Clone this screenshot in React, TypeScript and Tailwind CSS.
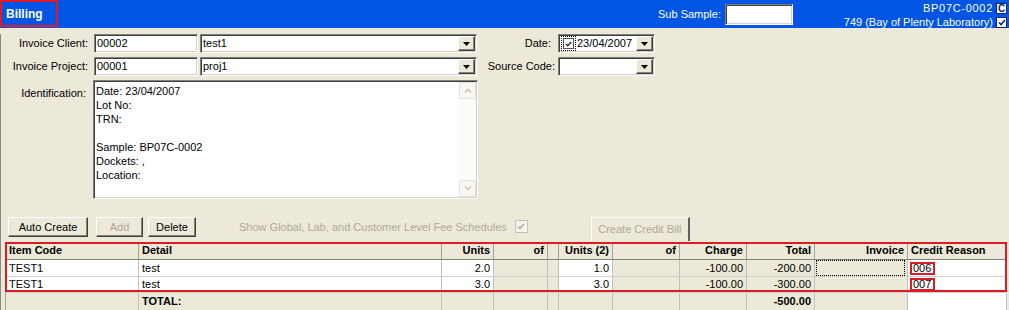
import React from "react";

const inset =
  "border border-t-[#7f7f7f] border-l-[#7f7f7f] border-b-white border-r-white shadow-[inset_1px_1px_0_#404040,inset_-1px_-1px_0_#d4d0c8] bg-white";
const raised =
  "border border-t-white border-l-white border-b-[#404040] border-r-[#404040] shadow-[inset_-1px_-1px_0_#808080] bg-[#ece9d8]";

const cols =
  "grid grid-cols-[133px_303px_52px_54px_11px_54px_67px_67px_68px_93px_99px]";

type Cell = {
  text?: React.ReactNode;
  right?: boolean;
  white?: boolean;
  focus?: boolean;
};

const rows: Cell[][] = [
  [
    { text: "TEST1", white: true },
    { text: "test", white: true },
    { text: "2.0", right: true, white: true },
    {},
    {},
    { text: "1.0", right: true, white: true },
    {},
    { text: "-100.00", right: true },
    { text: "-200.00", right: true },
    { focus: true },
    { text: "006", white: true },
  ],
  [
    { text: "TEST1", white: true },
    { text: "test", white: true },
    { text: "3.0", right: true, white: true },
    {},
    {},
    { text: "3.0", right: true, white: true },
    {},
    { text: "-100.00", right: true },
    { text: "-300.00", right: true },
    {},
    { text: "007", white: true },
  ],
];

const headers: { label: string; right?: boolean }[] = [
  { label: "Item Code" },
  { label: "Detail" },
  { label: "Units", right: true },
  { label: "of", right: true },
  { label: "" },
  { label: "Units (2)", right: true },
  { label: "of", right: true },
  { label: "Charge", right: true },
  { label: "Total", right: true },
  { label: "Invoice", right: true },
  { label: "Credit Reason" },
];

function DropBtn() {
  return (
    <div
      className={`mr-[1px] flex h-[15px] w-[17px] shrink-0 items-center justify-center self-center ${raised}`}
    >
      <svg width="7" height="4" viewBox="0 0 7 4">
        <path d="M0 0h7L3.5 4z" fill="#000" />
      </svg>
    </div>
  );
}

function Combo({ value, width }: { value?: string; width: string }) {
  return (
    <div className={`flex h-full ${width} ${inset}`}>
      <span className="flex flex-1 items-center pl-[2px]">{value}</span>
      <DropBtn />
    </div>
  );
}

function Button({
  label,
  width,
  disabled,
}: {
  label: string;
  width: string;
  disabled?: boolean;
}) {
  return (
    <div
      className={`flex h-[20px] ${width} items-center justify-center ${raised} ${
        disabled ? "text-[#aca899]" : "text-black"
      }`}
    >
      {label}
    </div>
  );
}

function ScrollArrow({ up }: { up?: boolean }) {
  return (
    <div className="flex h-[17px] w-[17px] items-center justify-center rounded-[2px] border border-[#e4e2d6] bg-[#f7f6f1]">
      <svg width="8" height="5" viewBox="0 0 8 5">
        <path
          d={up ? "M1 4.5L4 1.5 7 4.5" : "M1 0.5L4 3.5 7 0.5"}
          stroke="#c9c7ba"
          strokeWidth="1.6"
          fill="none"
        />
      </svg>
    </div>
  );
}

export default function App() {
  return (
    <div className="h-[310px] w-[1009px] overflow-hidden bg-[#ece9d8] font-['Liberation_Sans',Arial,sans-serif] text-[11px] leading-none text-black">
      {/* title bar */}
      <div className="flex h-[28px] items-start bg-[#0055e5] text-white">
        <div className="flex h-[27px] w-[58px] items-center border-2 border-[#dc1c24] pl-[4px] text-[12px] font-bold">
          Billing
        </div>
        <div className="ml-[600px] mt-[4px] flex h-[21px] items-center">
          <span className="mr-[4px]">Sub Sample:</span>
          <div className={`h-[21px] w-[68px] ${inset}`} />
        </div>
        <div className="ml-auto mr-[2px] flex flex-col items-end gap-[3px] pt-[3px]">
          <div className="flex items-center gap-[3px]">
            <span className="tracking-[0.7px]">BP07C-0002</span>
            <div className="flex h-[11px] w-[11px] items-center justify-center border border-[#0a246a] bg-white text-[10px] font-bold text-[#0a246a]">
              C
            </div>
          </div>
          <div className="flex items-center gap-[3px]">
            <span>749 (Bay of Plenty Laboratory)</span>
            <div className="flex h-[11px] w-[11px] items-center justify-center border border-[#0a246a] bg-white">
              <svg width="8" height="7" viewBox="0 0 8 7">
                <path d="M1 3.5L3 5.5 7 1" stroke="#0a246a" strokeWidth="1.6" fill="none" />
              </svg>
            </div>
          </div>
        </div>
      </div>

      {/* body */}
      <div className="h-[282px] border-l border-[#888]">
        {/* row 1 */}
        <div className="mt-[6px] flex h-[19px] items-center">
          <span className="w-[87px] text-right">Invoice Client:</span>
          <div className={`ml-[6px] flex h-full w-[104px] items-center pl-[2px] ${inset}`}>00002</div>
          <div className="ml-[2px] h-full">
            <Combo value="test1" width="w-[277px]" />
          </div>
          <span className="w-[74px] text-right">Date:</span>
          <div className={`ml-[7px] flex h-full w-[97px] items-center ${inset}`}>
            <div className="ml-[2px] flex h-[15px] w-[15px] items-center justify-center border border-dotted border-black">
              <div className="flex h-[11px] w-[11px] items-center justify-center border border-[#555] bg-white">
                <svg width="7" height="6" viewBox="0 0 7 6">
                  <path d="M1 3L2.8 4.8 6 1" stroke="#222" strokeWidth="1.3" fill="none" />
                </svg>
              </div>
            </div>
            <span className="ml-[1px] flex-1">23/04/2007</span>
            <DropBtn />
          </div>
        </div>

        {/* row 2 */}
        <div className="mt-[4px] flex h-[19px] items-center">
          <span className="w-[87px] text-right">Invoice Project:</span>
          <div className={`ml-[6px] flex h-full w-[104px] items-center pl-[2px] ${inset}`}>00001</div>
          <div className="ml-[2px] h-full">
            <Combo value="proj1" width="w-[277px]" />
          </div>
          <span className="w-[78px] text-right">Source Code:</span>
          <div className="ml-[3px] h-full">
            <Combo width="w-[97px]" />
          </div>
        </div>

        {/* identification */}
        <div className="mt-[4px] flex h-[119px] items-start">
          <span className="mt-[8px] w-[85px] text-right">Identification:</span>
          <div className={`ml-[7px] flex h-full w-[385px] ${inset}`}>
            <div className="flex-1 pl-[2px] pt-[3px] leading-[14px]">
              <div>Date: 23/04/2007</div>
              <div>Lot No:</div>
              <div>TRN:</div>
              <div>&nbsp;</div>
              <div>Sample: BP07C-0002</div>
              <div>Dockets: ,</div>
              <div>Location:</div>
            </div>
            <div className="my-[1px] mr-[1px] flex w-[17px] flex-col justify-between bg-[#fbfbf8]">
              <ScrollArrow up />
              <ScrollArrow />
            </div>
          </div>
        </div>

        {/* buttons */}
        <div className="mt-[18px] flex h-[25px] items-start">
          <div className="ml-[7px]">
            <Button label="Auto Create" width="w-[80px]" />
          </div>
          <div className="ml-[8px]">
            <Button label="Add" width="w-[47px]" disabled />
          </div>
          <div className="ml-[5px]">
            <Button label="Delete" width="w-[48px]" />
          </div>
          <span className="ml-[43px] mt-[5px] text-[#aca899]">
            Show Global, Lab, and Customer Level Fee Schedules
          </span>
          <div className="ml-[8px] mt-[3px] flex h-[13px] w-[13px] items-center justify-center border border-[#c5c2b2] bg-[#f4f3ee]">
            <svg width="8" height="7" viewBox="0 0 8 7">
              <path d="M1 3.5L3 5.5 7 1" stroke="#aca899" strokeWidth="1.5" fill="none" />
            </svg>
          </div>
          <div className="ml-[63px] flex h-[24px] w-[99px] items-center justify-center border-l border-r-2 border-t border-l-white border-r-[#606060] border-t-white text-[#aca899]">
            Create Credit Bill
          </div>
        </div>

        {/* table */}
        <div className="relative ml-[4px] w-[1001px] border-l border-[#a0a0a0]">
          <div className={`${cols} h-[18px] border-b border-[#7f7f7f] font-bold`}>
            {headers.map((h, i) => (
              <div
                key={i}
                className={`flex items-center border-r border-[#a3a195] px-[3px] ${
                  h.right ? "justify-end" : ""
                }`}
              >
                {h.label}
              </div>
            ))}
          </div>
          {rows.map((r, ri) => (
            <div
              key={ri}
              className={`${cols} ${ri === 0 ? "h-[17px]" : "h-[16px]"} border-b border-[#d0d0d0]`}
            >
              {r.map((c, ci) => (
                <div
                  key={ci}
                  className={`flex items-center border-r border-[#c0c0c0] ${
                    c.white ? "bg-white" : "bg-[#ece9d8]"
                  } ${c.right ? "justify-end pr-[3px]" : "pl-[3px]"}`}
                >
                  {c.focus ? (
                    <div className="-ml-[2px] h-full w-full border border-dotted border-black" />
                  ) : ci === 10 ? (
                    <span className="-ml-[1px] inline-flex h-[13px] w-[25px] items-center border-2 border-[#dc1c24] pl-[1px]">
                      {c.text}
                    </span>
                  ) : (
                    c.text
                  )}
                </div>
              ))}
            </div>
          ))}
          <div className={`${cols} h-[17px]`}>
            {headers.map((_, i) => (
              <div
                key={i}
                className={`flex items-center border-r border-[#c0c0c0] font-bold ${
                  i === 10 ? "bg-white" : "bg-[#ece9d8]"
                } ${i === 8 ? "justify-end pr-[3px]" : "pl-[3px]"}`}
              >
                {i === 1 ? "TOTAL:" : i === 8 ? "-500.00" : ""}
              </div>
            ))}
          </div>
          <div className="pointer-events-none absolute left-[-1px] top-0 h-[50px] w-[1002px] border-2 border-[#dc1c24]" />
        </div>
      </div>
    </div>
  );
}
